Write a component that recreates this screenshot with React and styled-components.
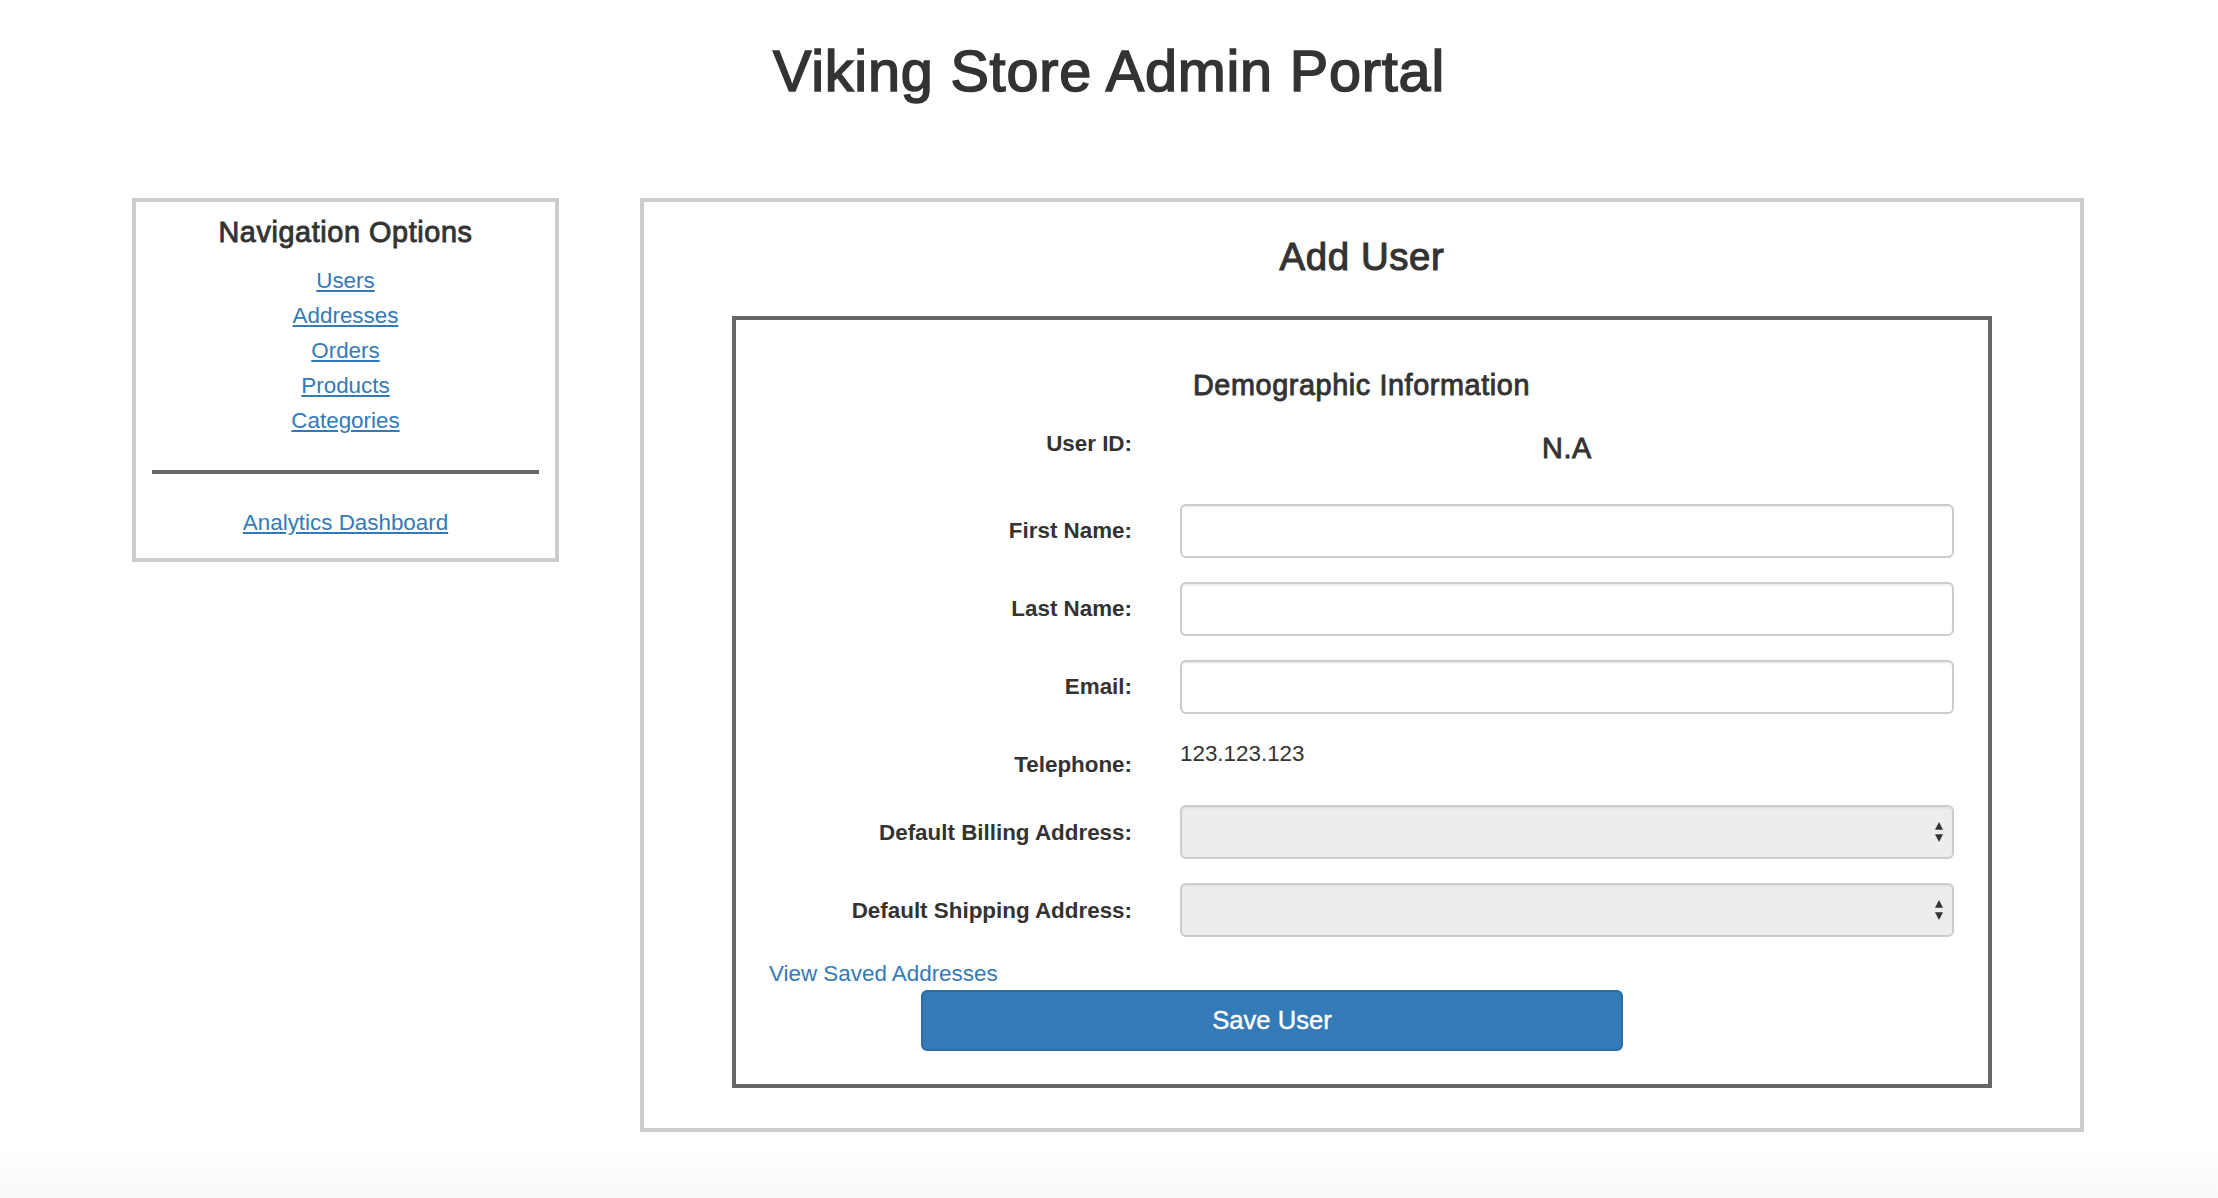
import React from "react";
import styled, { createGlobalStyle } from "styled-components";

const GlobalStyle = createGlobalStyle`
  * {
    box-sizing: border-box;
  }
  body {
    margin: 0;
    font-family: "Liberation Sans", Arial, Helvetica, sans-serif;
    font-size: 22.4px;
    color: #333;
    background: #fff;
  }
`;

const Page = styled.div`
  min-height: 1198px;
  background: linear-gradient(to bottom, #fff 0, #fff 1145px, #f9f9f9 1198px);
  overflow: hidden;
`;

const Title = styled.h1`
  margin: 40px 0 0;
  text-align: center;
  font-size: 57.6px;
  font-weight: 400;
  line-height: 1.1;
  letter-spacing: 0.8px;
  color: #333;
  -webkit-text-stroke: 1.6px #333;
`;

const Layout = styled.div`
  display: flex;
  align-items: flex-start;
  gap: 81px;
  margin-top: 94.6px;
  padding: 0 134px 0 132px;
`;

const NavPanel = styled.aside`
  width: 427px;
  flex-shrink: 0;
  border: 4px solid #ccc;
  padding: 15px 16px 18px;
  text-align: center;
`;

// h4-sized heading used in the nav and in the form box
const SubHeading = styled.h4`
  margin: 0 0 ${(p) => p.$gap}px;
  font-size: 28.8px;
  font-weight: 400;
  line-height: 1.1;
  letter-spacing: 0.6px;
  color: #333;
  text-align: center;
  -webkit-text-stroke: 0.9px #333;
`;

const NavLink = styled.a`
  display: block;
  line-height: 35px;
  color: #337ab7;
  text-decoration: underline;
  text-underline-offset: 2px;
`;

const Divider = styled.div`
  height: 4px;
  background: #666;
  margin: 32.3px 0 30.7px;
`;

const MainPanel = styled.section`
  flex: 1;
  border: 4px solid #ccc;
  padding: 33.6px 88px 40px;
`;

const PageHeading = styled.h3`
  margin: 0 0 38.2px;
  text-align: center;
  font-size: 38.4px;
  font-weight: 400;
  line-height: 1.1;
  letter-spacing: 0.6px;
  color: #333;
  -webkit-text-stroke: 1.1px #333;
`;

const FormBox = styled.div`
  border: 4px solid #666;
  padding: 50px 10px 33px 9px;
`;

const Form = styled.form`
  display: flex;
  flex-direction: column;
`;

const FormRow = styled.div`
  display: grid;
  grid-template-columns: 1fr 2fr;
  margin-bottom: 24px;
`;

const Label = styled.label`
  padding: 11.2px 24px 0;
  text-align: right;
  font-weight: 700;
  line-height: 32px;
  color: #333;
`;

const Field = styled.div`
  padding: 0 24px;
`;

const TextInput = styled.input`
  display: block;
  width: 100%;
  height: 54px;
  border: 2px solid #ccc;
  border-radius: 6px;
  box-shadow: inset 0 1.6px 1.6px rgba(0, 0, 0, 0.075);
  background: #fff;
  font: inherit;
  padding: 0 19px;
`;

const IdValue = styled.h4`
  margin: 16px 0;
  text-align: center;
  font-size: 28.8px;
  font-weight: 400;
  line-height: 1.1;
  letter-spacing: 0.6px;
  -webkit-text-stroke: 0.9px #333;
`;

const StaticValue = styled.p`
  margin: 0;
  line-height: 32px;
  color: #333;
`;

const SelectBox = styled.div`
  display: flex;
  align-items: center;
  justify-content: flex-end;
  height: 54px;
  border: 2px solid #ccc;
  border-radius: 6px;
  background: #ededed;
  box-shadow: inset 0 1.6px 1.6px rgba(0, 0, 0, 0.05);
  padding-right: 9px;
`;

const TextLink = styled.a`
  display: block;
  padding: 0 24px;
  margin-top: -3px;
  line-height: 32px;
  color: #337ab7;
  text-decoration: none;
`;

const SaveButton = styled.button`
  display: block;
  width: 702px;
  height: 61px;
  margin-left: 176px;
  border: 2px solid #2e6da4;
  border-radius: 6px;
  background: #337ab7;
  color: #fff;
  font-family: inherit;
  font-size: 25.6px;
  -webkit-text-stroke: 0.4px #fff;
  cursor: pointer;
`;

const SelectArrows = () => (
  <svg width="8" height="20" viewBox="0 0 8 20">
    <polygon points="4,0 8,7.7 0,7.7" fill="#333" />
    <polygon points="0,12.3 8,12.3 4,20" fill="#333" />
  </svg>
);

const navItems = ["Users", "Addresses", "Orders", "Products", "Categories"];
const textFields = ["First Name:", "Last Name:", "Email:"];
const addressFields = ["Default Billing Address:", "Default Shipping Address:"];

const App = () => {
  return (
    <Page>
      <GlobalStyle />
      <Title>Viking Store Admin Portal</Title>
      <Layout>
        <NavPanel>
          <SubHeading $gap={14}>Navigation Options</SubHeading>
          {navItems.map((item) => (
            <NavLink key={item} href="#">
              {item}
            </NavLink>
          ))}
          <Divider />
          <NavLink href="#">Analytics Dashboard</NavLink>
        </NavPanel>

        <MainPanel>
          <PageHeading>Add User</PageHeading>
          <FormBox>
            <SubHeading $gap={15}>Demographic Information</SubHeading>
            <Form onSubmit={(e) => e.preventDefault()}>
              <FormRow>
                <Label>User ID:</Label>
                <Field>
                  <IdValue>N.A</IdValue>
                </Field>
              </FormRow>
              {textFields.map((name) => (
                <FormRow key={name}>
                  <Label>{name}</Label>
                  <Field>
                    <TextInput type="text" />
                  </Field>
                </FormRow>
              ))}
              <FormRow>
                <Label>Telephone:</Label>
                <Field>
                  <StaticValue>123.123.123</StaticValue>
                </Field>
              </FormRow>
              {addressFields.map((name) => (
                <FormRow key={name}>
                  <Label>{name}</Label>
                  <Field>
                    <SelectBox>
                      <SelectArrows />
                    </SelectBox>
                  </Field>
                </FormRow>
              ))}
              <TextLink href="#">View Saved Addresses</TextLink>
              <SaveButton type="submit">Save User</SaveButton>
            </Form>
          </FormBox>
        </MainPanel>
      </Layout>
    </Page>
  );
};

export default App;
